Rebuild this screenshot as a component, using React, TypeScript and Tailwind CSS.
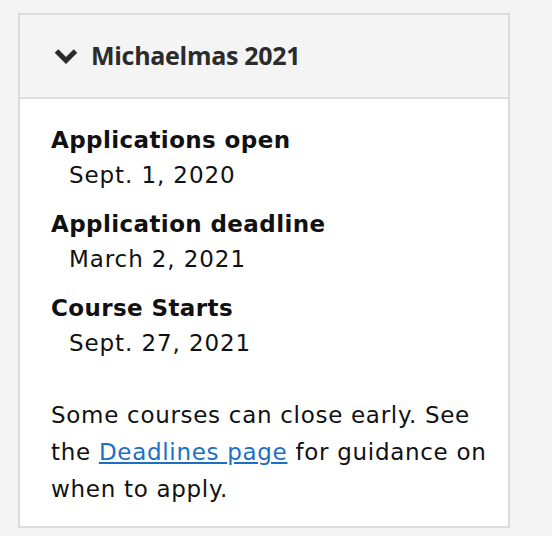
import React from 'react';

const dates = [
  { label: 'Applications open', value: 'Sept. 1, 2020' },
  { label: 'Application deadline', value: 'March 2, 2021' },
  { label: 'Course Starts', value: 'Sept. 27, 2021' },
];

const Chevron: React.FC = () => (
  <svg viewBox="0 0 24 16" className="w-[24px] h-[16px]" fill="none">
    <path d="M2.5 3 L12 12.5 L21.5 3" stroke="#2b2b2b" strokeWidth="5" strokeLinejoin="miter" />
  </svg>
);

const App: React.FC = () => {
  return (
    <div className="w-[552px] h-[536px] bg-[#f3f3f3] pt-[13px] pl-[18px] overflow-hidden">
      <div className="w-[492px] border-2 border-[#dcdcdc] bg-white">
        <div className="h-[84px] bg-[#f4f4f5] border-b-2 border-[#dcdcdc] flex items-center gap-[13px] pl-[34px]">
          <Chevron />
          <h2 className="font-['Open_Sans',sans-serif] font-bold text-[25px] text-[#2b2b2b] tracking-[-0.3px]">
            Michaelmas 2021
          </h2>
        </div>
        <div className="pl-[31px] pr-[18px] pt-[24px] pb-[20px] font-['DejaVu_Sans','Verdana',sans-serif] text-[#111] text-[23px]">
          <dl>
            {dates.map((d) => (
              <div key={d.label} className="mb-[14px]">
                <dt className="font-bold leading-[35px] tracking-[0.4px]">{d.label}</dt>
                <dd className="ml-[18px] leading-[35px] tracking-[0.9px]">{d.value}</dd>
              </div>
            ))}
          </dl>
          <p className="leading-[37px] mt-[36px] mb-[-2px] tracking-[0.7px]">
            Some courses can close early. See the{' '}
            <a href="#" className="text-[#1d6fc4] underline">Deadlines page</a>{' '}
            for guidance on when to apply.
          </p>
        </div>
      </div>
    </div>
  );
};

export default App;
